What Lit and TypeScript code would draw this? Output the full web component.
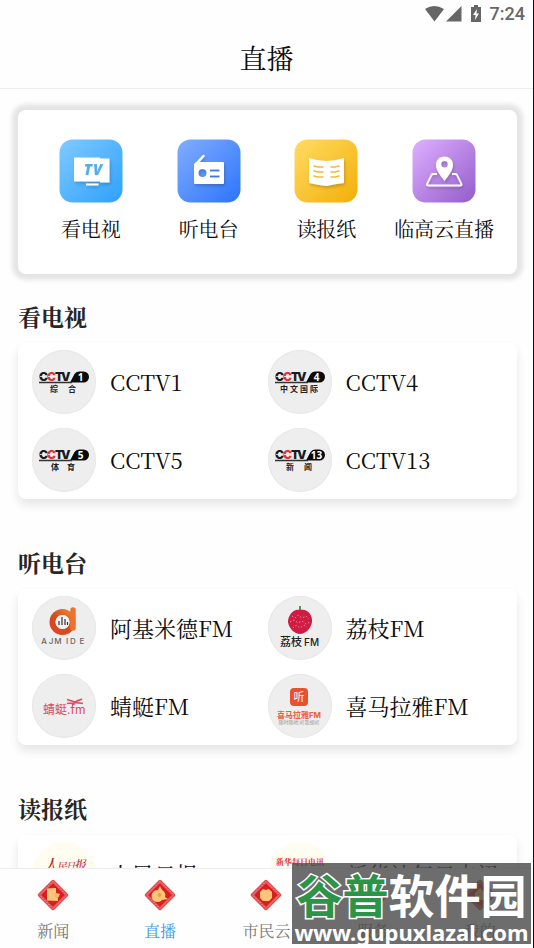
import { LitElement, html, css, svg } from "lit";
import { customElement } from "lit/decorators.js";
import { classMap } from "lit/directives/class-map.js";

interface Channel {
  name: string;
  logo: unknown;
  tint?: boolean;
}

const logoFrame = (content: unknown) => html`
  <svg class="logo" viewBox="0 0 64 64" aria-hidden="true">${content}</svg>`;

const cctvLogo = (num: string, label: string, labelSize: number, gap: number) => {
  const chars = [...label];
  const pitch = labelSize + gap;
  const start = 31 - ((chars.length - 1) * pitch) / 2;
  return logoFrame(svg`
    <text class="mark" x="7" y="31">C</text>
    <text class="mark red" x="15" y="31">C</text>
    <text class="mark" x="23" y="31">T</text>
    <text class="mark" x="29" y="31">V</text>
    <path d="M8 26.500H14M16 26.500H22" stroke="#eee" stroke-width=".8"/>
    <path d="M38 32.500 L42.500 24 Q44 21.500 47 21.500 H51.500 A5.500 5.500 0 0 1 51.500 32.500 Z" fill="#0a0a0a"/>
    <path d="M7 32.500H40" stroke="#333" stroke-width="1.300"/>
    <text class="digit" x="48.500" y="30.500" text-anchor="middle">${num}</text>
    ${chars.map((c, i) => svg`<text class="sub" font-size=${labelSize} x=${start + i * pitch} y="42" text-anchor="middle">${c}</text>`)}`);
};

const ajmideLogo = logoFrame(svg`
  <defs><linearGradient id="aj" x1="0" y1="1" x2="1" y2="0">
    <stop offset="0" stop-color="#e8431d"/><stop offset=".45" stop-color="#cf4d22"/><stop offset="1" stop-color="#f0832f"/>
  </linearGradient></defs>
  <circle cx="30.500" cy="26" r="10" fill="none" stroke="url(#aj)" stroke-width="6"/>
  <path d="M41 14V32" stroke="#ec7430" stroke-width="5.500" stroke-linecap="round"/>
  <circle cx="30.500" cy="26" r="7" fill="#f1f1f1"/>
  <path d="M27 25v4M30 21v8M33 23v6M35.500 26v3" stroke="#333" stroke-width="1.200"/>
  ${[..."AJMIDE"].map((c, i) => svg`<text x=${[12, 19, 26, 35, 41, 50][i]} y="48" text-anchor="middle" font-family="Inter, sans-serif" font-size="8" font-weight="500" fill="#666">${c}</text>`)}`);

const qingtingLogo = logoFrame(svg`
  <text x="11" y="40" font-family="'Noto Sans CJK SC', sans-serif" font-size="12" fill="#de4a5e">蜻蜓</text>
  <text x="35" y="40" font-family="Inter, sans-serif" font-size="12" fill="#de4a5e">.fm</text>
  <path d="M35 25.500 L43 28 L50 25 M35 29.500 L43 28.500 L51 29.500 M40 31 L46 26" stroke="#de4a5e" stroke-width="1.600" fill="none"/>`);

const lizhiLogo = logoFrame(svg`
  <path d="M32 10v6" stroke="#548546" stroke-width="1.800"/>
  <path d="M32 14C39 12 45 19 44 26C43 33 37 38 32 38C27 38 21 33 20 26C20 19 26 12 32 14Z" fill="#cf1c43"/>
  <path d="M24 20l3 2 3-3 4 3 4-2 3 3M22 26l4-2 4 3 4-2 4 3 4-2M25 32l3-3 4 3 4-3 3 2" fill="none" stroke="#f1879c" stroke-width="1" stroke-dasharray="1.500 2"/>
  <text x="12" y="50" font-family="'Noto Sans CJK SC', sans-serif" font-size="11" font-weight="500" fill="#222">荔枝</text>
  <text x="36" y="50" font-family="Inter, sans-serif" font-size="10" font-weight="500" fill="#222">FM</text>`);

const ximalayaLogo = logoFrame(svg`
  <rect x="22" y="14" width="18" height="18" rx="4" fill="#e8502f"/>
  <text x="31" y="27" text-anchor="middle" font-family="'Noto Sans CJK SC', sans-serif" font-size="11" fill="#fff">听</text>
  <text x="31" y="44" text-anchor="middle" font-family="Inter, 'Noto Sans CJK SC', sans-serif" font-size="8" font-weight="700" fill="#ee5b39">喜马拉雅FM</text>
  <text x="31" y="50" text-anchor="middle" font-family="'Noto Sans CJK SC', sans-serif" font-size="5" fill="#999">随时随地 听我想听</text>`);

const peopleLogo = logoFrame(svg`
  <g font-family="'Noto Serif CJK SC', 'Noto Sans CJK SC', serif" fill="#c5202c" font-weight="500" transform="skewX(-12)">
    <text x="17" y="29" font-size="16">人</text>
    <text x="31" y="28" font-size="10">民</text>
    <text x="40" y="27" font-size="9">日</text>
    <text x="48" y="27" font-size="12">报</text>
  </g>`);

const xinhuaLogo = logoFrame(svg`
  <text x="32" y="23" text-anchor="middle" font-family="'Noto Serif CJK SC', 'Noto Sans CJK SC', serif" font-size="8" font-weight="700" fill="#e03030">新华每日电讯</text>
  <path d="M8 27H56" stroke="#777" stroke-width="1" stroke-dasharray="2 1"/>`);

const sections: { title: string; channels: Channel[] }[] = [
  {
    title: "看电视",
    channels: [
      { name: "CCTV1", logo: cctvLogo("1", "综合", 8, 10) },
      { name: "CCTV4", logo: cctvLogo("4", "中文国际", 8, 2) },
      { name: "CCTV5", logo: cctvLogo("5", "体育", 8, 8) },
      { name: "CCTV13", logo: cctvLogo("13", "新闻", 8, 10) },
    ],
  },
  {
    title: "听电台",
    channels: [
      { name: "阿基米德FM", logo: ajmideLogo },
      { name: "荔枝FM", logo: lizhiLogo },
      { name: "蜻蜓FM", logo: qingtingLogo },
      { name: "喜马拉雅FM", logo: ximalayaLogo },
    ],
  },
  {
    title: "读报纸",
    channels: [
      { name: "人民日报", logo: peopleLogo, tint: true },
      { name: "新华社每日电讯", logo: xinhuaLogo, tint: true },
    ],
  },
];

const shortcut = (id: string, from: string, to: string, glyph: unknown) => html`
  <svg class="tile" viewBox="0 0 64 64" aria-hidden="true">
    <defs>
      <linearGradient id=${id} x1="0" y1="0" x2="1" y2="1">
        <stop offset="0" stop-color=${from}/><stop offset="1" stop-color=${to}/>
      </linearGradient>
      <filter id="${id}s" x="-30%" y="-30%" width="160%" height="160%">
        <feDropShadow dx="1" dy="2" stdDeviation="1.500" flood-color="#000" flood-opacity=".2"/>
      </filter>
    </defs>
    <rect x=".5" y=".5" width="63" height="63" rx="13" fill="url(#${id})"/>
    <g filter="url(#${id}s)">${glyph}</g>
  </svg>`;

const shortcuts = [
  {
    label: "看电视",
    icon: shortcut("tv", "#7fcaff", "#2fa0fd", svg`
      <path d="M15 18.500H41V19.500H50.500V43.500H41V42.500H15Z M27 44.500H39.500V46.500H27Z" fill="#fff"/>
      <text x="34" y="36" text-anchor="middle" font-family="'Open Sans', sans-serif" font-size="15" font-weight="800" font-style="italic" fill="#52aeea"><tspan>T</tspan><tspan dx="1">V</tspan></text>`),
  },
  {
    label: "听电台",
    icon: shortcut("radio", "#82adff", "#2c74fb", svg`
      <path d="M19 25 L26.500 17" stroke="#fff" stroke-width="2.500" stroke-linecap="round"/>
      <path fill-rule="evenodd" d="M19 23H46Q47 23 47 24V44Q47 45 46 45H18Q17 45 17 44V25Z M25.500 30A4 4 0 1 0 25.500 38A4 4 0 1 0 25.500 30Z M33 30.500H42.500V32.500H33Z M33 36.500H42.500V38.500H33Z" fill="#fff"/>`),
  },
  {
    label: "读报纸",
    icon: shortcut("paper", "#ffdc63", "#f3ae08", svg`
      <path d="M15 19Q24 22 32.500 22Q41 22 50 19V44Q41 45 32.500 47Q24 46 15 44Z" fill="#fff"/>
      <path d="M20 27l4 1h5M20 32l4 1h5M20 37l4 1h5M37 28h4l4-1M37 33h4l4-1M37 38h4l4-1" fill="none" stroke="#f1bb35" stroke-width="1.600" stroke-linecap="round"/>`),
  },
  {
    label: "临高云直播",
    icon: shortcut("map", "#dfb0ff", "#935ccb", svg`
      <path d="M25 35H21Q20 35 19.500 36L15 45Q14.500 46.500 16 46.500H48.500Q50 46.500 49.500 45L45 36Q44.500 35 43.500 35H40" fill="none" stroke="#fff" stroke-width="1.800"/>
      <path fill-rule="evenodd" d="M32.500 17.500C27.500 17.500 24 21 24 26C24 31 28 36 32.500 42C37 36 41 31 41 26C41 21 37.500 17.500 32.500 17.500Z M32.500 22A3.300 3.300 0 1 1 32.500 28.600A3.300 3.300 0 1 1 32.500 22Z" fill="#fff"/>`),
  },
];

const emblem = (glyph: unknown) => html`
  <svg class="emblem" viewBox="0 0 34 34" aria-hidden="true">
    <path d="M17 3.500 L30.500 17 L17 30.500 L3.500 17Z" fill="#dd2123" stroke="#e2484a" stroke-width="3.500" stroke-linejoin="round"/>
    <path d="M17 3.500 L30.500 17 L17 30.500 L3.500 17Z" fill="none" stroke="#f6b3a6" stroke-width=".9" stroke-dasharray="1.500 1.200"/>
    <path d="M17 6.500 L27.500 17 L17 27.500 L6.500 17Z" fill="none" stroke="#c9141b" stroke-width="1"/>
    <g fill="#fcc67a">${glyph}</g>
  </svg>`;

const tabs = [
  { label: "新闻", glyph: svg`<path d="M11 10.500L20 10V15L24 16L22 20V23L11 22.500Z"/><path d="M20 15V19L22 20" fill="none" stroke="#e99a4e" stroke-width=".8"/>` },
  { label: "直播", glyph: svg`<path d="M17 8L19 12A5.500 5.500 0 0 1 22 19L25 21L19 22A6 6 0 1 1 15 12Z"/><circle cx="16.500" cy="17" r="2" fill="#eda04b"/>` },
  { label: "市民云", glyph: svg`<path d="M11 14L14 11L17 12L20 11L23 14V20L20 23H14L11 20Z"/>` },
  { label: "服务", glyph: svg`<path d="M11 12H23V22H11Z"/>` },
  { label: "我的", glyph: svg`<path d="M17 10L22 15V22H12V15Z"/>` },
];

@customElement("app-root")
class AppRoot extends LitElement {
  static properties = { active: { state: true } };
  declare active: number;

  constructor() {
    super();
    this.active = 1;
  }

  static styles = css`
    :host {
      display: flex;
      flex-direction: column;
      position: relative;
      box-sizing: border-box;
      height: 100vh;
      overflow: hidden;
      background: #fefefe;
      border-right: 1px solid #06131a;
      color: #0c0c0c;
      font-family: "Noto Serif CJK SC", "Liberation Serif", "Noto Sans CJK SC", serif;
    }
    button {
      border: 0;
      padding: 0;
      background: none;
      color: inherit;
      font-family: inherit;
      cursor: pointer;
    }
    a { color: inherit; text-decoration: none; }
    h1, h2 { margin: 0; }
    .status {
      display: flex;
      justify-content: flex-end;
      align-items: center;
      gap: 8px;
      height: 28px;
      padding-right: 8px;
      color: #666;
      font: 500 18px/28px Roboto, sans-serif;
    }
    .signals { width: 58px; height: 18px; fill: #666; }
    .title {
      border-bottom: 1px solid #ececec;
      font-size: 27px;
      font-weight: 400;
      line-height: 60px;
      text-align: center;
    }
    main {
      flex: 1;
      min-height: 0;
      overflow: hidden;
      padding: 21px 16px 0 18px;
    }
    .shortcuts {
      display: grid;
      grid-template-columns: repeat(4, 1fr);
      padding: 29px 14px 33px;
      border-radius: 8px;
      background: #fff;
      box-shadow: 0 0 4px 6px #e5e5e5;
    }
    .shortcut {
      display: flex;
      flex-direction: column;
      align-items: center;
      gap: 14px;
      font-size: 20px;
      line-height: 24px;
      white-space: nowrap;
    }
    .tile { width: 64px; height: 64px; }
    section { margin-bottom: 50px; }
    .shortcuts + section { margin-top: 29px; }
    h2 {
      margin-bottom: 12px;
      color: #262626;
      font-size: 23px;
      font-weight: 700;
      line-height: 28px;
    }
    .channels {
      display: grid;
      grid-template-columns: 1fr 1fr;
      gap: 14px 0;
      padding: 7px 14px;
      border-radius: 8px;
      background: #fff;
      box-shadow: 0 6px 10px #e6e6e6;
    }
    .channel {
      display: flex;
      align-items: center;
      gap: 14px;
      font-size: 22px;
      line-height: 28px;
      white-space: nowrap;
    }
    .logo {
      width: 64px;
      height: 64px;
      border-radius: 50%;
      background: #eee;
      box-shadow: inset 0 0 0 1px #e8e8e8;
    }
    .tint .logo { background: #fffdf0; box-shadow: none; }
    .mark { font: 900 12px Inter, sans-serif; fill: #1c1c1c; }
    .red { fill: #e0343a; }
    .digit { font: 700 10px "Open Sans", sans-serif; fill: #fff; }
    .sub { font-family: "Noto Sans CJK SC", sans-serif; font-weight: 700; fill: #222; }
    nav {
      position: relative;
      display: grid;
      grid-template-columns: repeat(5, 1fr);
      height: 79px;
      background: #fefefe;
      box-shadow: 0 -1px 1px #eee;
    }
    .tab {
      display: flex;
      flex-direction: column;
      align-items: center;
      gap: 9px;
      padding-top: 9px;
      color: #777;
      font-size: 16px;
      font-weight: 400;
      line-height: 20px;
    }
    .tab.active { color: #3c9be8; }
    .emblem { width: 34px; height: 34px; }
    .watermark {
      position: absolute;
      right: 2px;
      bottom: 4px;
      display: flex;
      flex-direction: column;
      align-items: center;
      box-sizing: border-box;
      width: 239px;
      height: 81px;
      padding-top: 3px;
      background: rgb(72 72 72 / 0.8);
      color: #fff;
      white-space: nowrap;
    }
    .brand {
      font: 700 46px/54px "Noto Sans CJK SC", sans-serif;
    }
    .green {
      color: #2c9447;
      paint-order: stroke fill;
      -webkit-text-stroke: 3px #fff;
    }
    .site { font: 700 22px/24px "Noto Sans", sans-serif; }
  `;

  render() {
    return html`
      <div class="status">
        <svg class="signals" viewBox="0 0 58 18" aria-hidden="true">
          <path d="M1 4Q10-2 20 4L10.500 16.500Z"/>
          <path d="M22 16.500H37.500V1Z"/>
          <path fill-rule="evenodd" d="M47 2H50V0H54V2H57V17H47Z M53 4L49 10H51.500L51 15L55 8.500H52.500Z"/>
        </svg>
        <span>7:24</span>
      </div>
      <h1 class="title">直播</h1>
      <main>
        <div class="shortcuts">
          ${shortcuts.map((s) => html`<button class="shortcut">${s.icon}<span>${s.label}</span></button>`)}
        </div>
        ${sections.map((s) => html`
          <section>
            <h2>${s.title}</h2>
            <div class="channels">
              ${s.channels.map((c) => html`
                <a href="#" class=${classMap({ channel: true, tint: !!c.tint })}>${c.logo}<span>${c.name}</span></a>`)}
            </div>
          </section>`)}
      </main>
      <nav>
        ${tabs.map((t, i) => html`
          <button class=${classMap({ tab: true, active: i === this.active })} @click=${() => (this.active = i)}>
            ${emblem(t.glyph)}<span>${t.label}</span>
          </button>`)}
      </nav>
      <div class="watermark">
        <div class="brand"><span class="green">谷普</span>软件园</div>
        <div class="site">www.gupuxlazal.com</div>
      </div>`;
  }
}
